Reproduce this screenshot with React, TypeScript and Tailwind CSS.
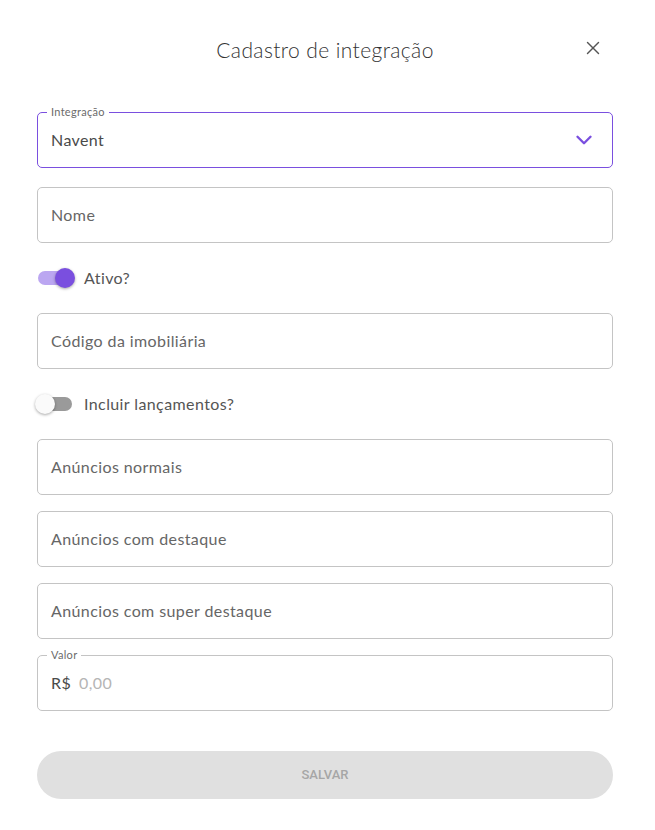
import { ChevronDown, X } from 'lucide-react';

function Field({ placeholder }: { placeholder: string }) {
  return (
    <div className="h-[56px] rounded-[5px] border border-[#c4c4c4] flex items-center px-[13px] text-[16px] tracking-[0.4px] text-[#666]">
      {placeholder}
    </div>
  );
}

function Toggle({ on, label }: { on: boolean; label: string }) {
  return (
    <div className="h-[38px] flex items-center gap-[12px]">
      <div className="relative w-[34px] h-[14px] ml-[1px]">
        <div className={`absolute inset-0 rounded-full ${on ? 'bg-[#bba6f1]' : 'bg-[#9a9a9a]'}`}></div>
        <div
          className={`absolute top-[-3px] w-[20px] h-[20px] rounded-full shadow-[0_1px_3px_rgba(0,0,0,0.35)] ${
            on ? 'left-[17px] bg-[#7a4fdf]' : 'left-[-3px] bg-[#fafafa]'
          }`}
        ></div>
      </div>
      <span className="text-[16px] tracking-[0.4px] text-[#555]">{label}</span>
    </div>
  );
}

export default function App() {
  return (
    <div className="w-[655px] h-[830px] bg-white font-['Lato',sans-serif]">
      <div className="pl-[37px] pr-[42px] pt-[32px]">
        {/* Header */}
        <div className="relative h-[36px] flex items-center justify-center">
          <h2 className="text-[21px] font-light tracking-[0.4px] text-[#333]">Cadastro de integração</h2>
          <button className="absolute right-[9px] top-[5px] text-[#555]">
            <X className="w-[22px] h-[22px]" strokeWidth={1.5} />
          </button>
        </div>

        <div className="mt-[44px] flex flex-col gap-[16px]">
          {/* Integração select */}
          <div className="relative h-[56px] mb-[3px] rounded-[5px] border border-[#7a4fdf] flex items-center justify-between px-[13px]">
            <span className="absolute -top-[8px] left-[9px] bg-white px-[4px] text-[11px] leading-[14px] tracking-[0.3px] text-[#6b6b6b]">
              Integração
            </span>
            <span className="text-[16px] tracking-[0.4px] text-[#4a4a4a]">Navent</span>
            <ChevronDown className="w-[26px] h-[26px] text-[#7a4fdf] mr-[2px]" strokeWidth={2.2} />
          </div>

          <Field placeholder="Nome" />
          <Toggle on label="Ativo?" />
          <Field placeholder="Código da imobiliária" />
          <Toggle on={false} label="Incluir lançamentos?" />
          <Field placeholder="Anúncios normais" />
          <Field placeholder="Anúncios com destaque" />
          <Field placeholder="Anúncios com super destaque" />

          {/* Valor */}
          <div className="relative h-[56px] rounded-[5px] border border-[#c4c4c4] flex items-center px-[13px] gap-[8px] text-[16px] tracking-[0.4px]">
            <span className="absolute -top-[8px] left-[9px] bg-white px-[4px] text-[11px] leading-[14px] tracking-[0.3px] text-[#6b6b6b]">
              Valor
            </span>
            <span className="text-[#4a4a4a]">R$</span>
            <span className="text-[#b5b5b5]">0,00</span>
          </div>
        </div>

        <button className="mt-[40px] w-full h-[48px] rounded-full bg-[#e0e0e0] text-[13px] font-medium text-[#a6a6a6] font-['Roboto',sans-serif]">
          SALVAR
        </button>
      </div>
    </div>
  );
}
